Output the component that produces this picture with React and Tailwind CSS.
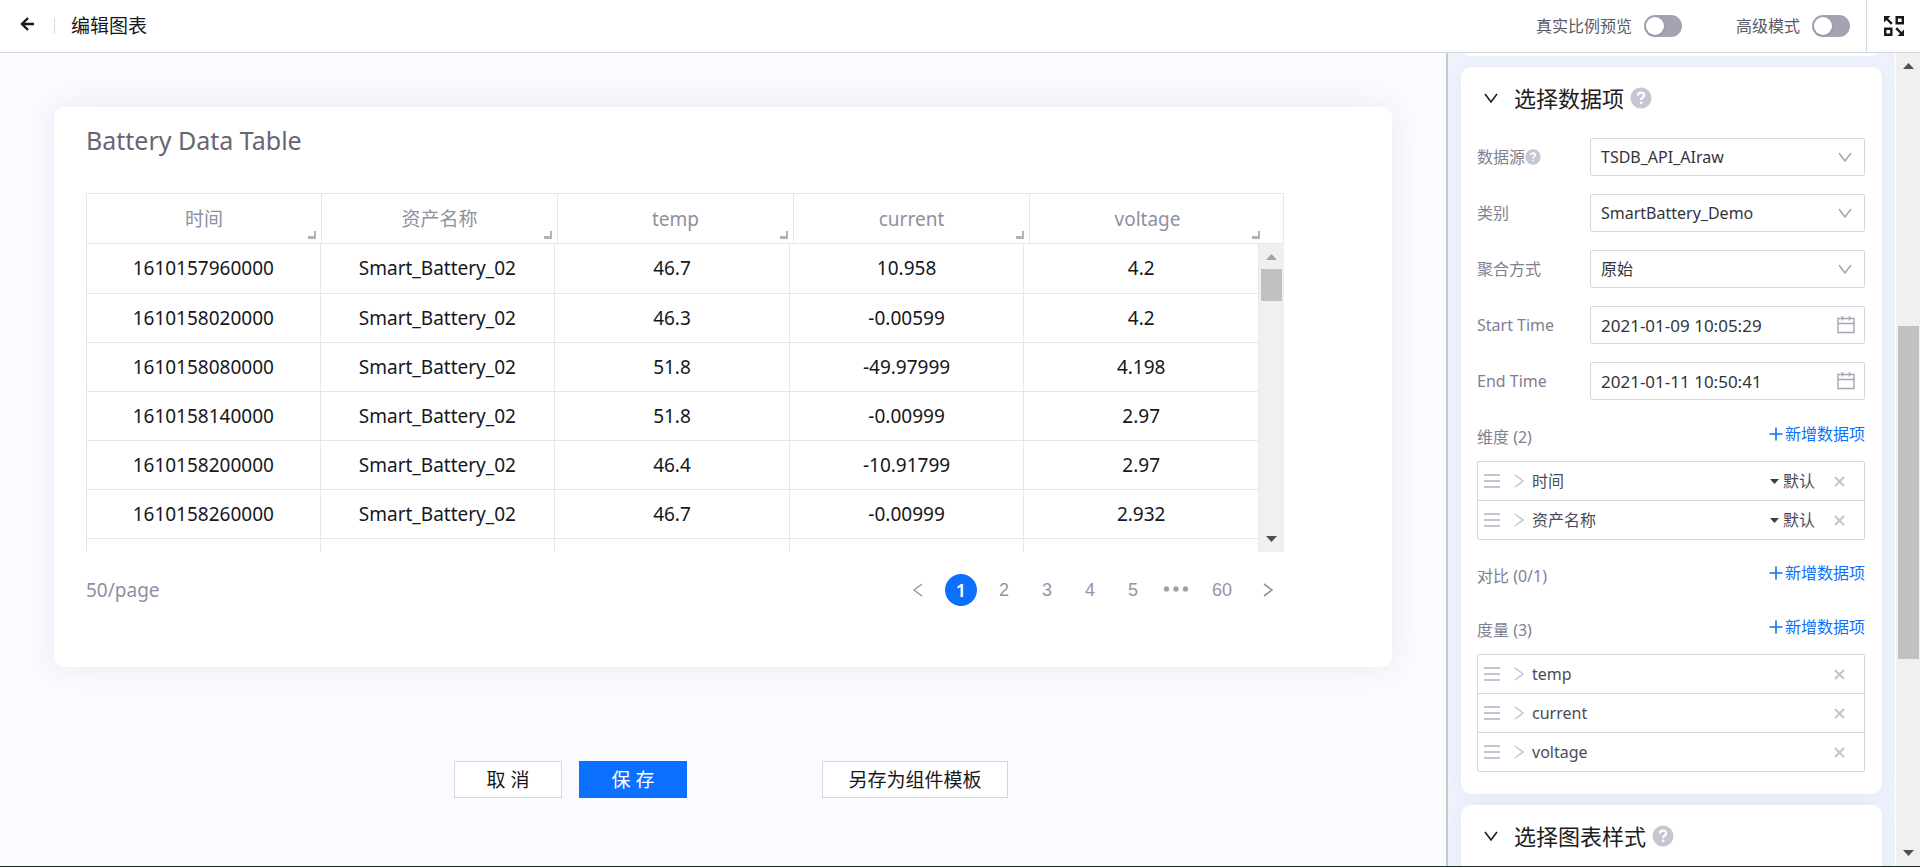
import React, { useState } from 'react'

const ROWS = [
    ['1610157960000', 'Smart_Battery_02', '46.7', '10.958', '4.2'],
    ['1610158020000', 'Smart_Battery_02', '46.3', '-0.00599', '4.2'],
    ['1610158080000', 'Smart_Battery_02', '51.8', '-49.97999', '4.198'],
    ['1610158140000', 'Smart_Battery_02', '51.8', '-0.00999', '2.97'],
    ['1610158200000', 'Smart_Battery_02', '46.4', '-10.91799', '2.97'],
    ['1610158260000', 'Smart_Battery_02', '46.7', '-0.00999', '2.932'],
]

const COLUMNS = ['时间', '资产名称', 'temp', 'current', 'voltage']

const Chevron = ({ className, d, width = 14, height = 14, stroke = 1.4 }) => (
    <svg className={className} width={width} height={height} viewBox="0 0 14 14" fill="none" stroke="currentColor" strokeWidth={stroke}>
        <path d={d} />
    </svg>
)

const DOWN = 'M1 3l6 8 6-8'
const RIGHT = 'M3 1l8 6-8 6'
const LEFT = 'M11 1L3 7l8 6'

const Help = ({ className }) => (
    <svg className={className} viewBox="0 0 22 22" fill="none">
        <circle cx="11" cy="11" r="10.5" fill="#c5c5d3" />
        <path d="M7.9 8.6c0-1.8 1.3-2.9 3.1-2.9s3.1 1.1 3.1 2.7c0 2.2-3 2.3-3 4.7" stroke="#fff" strokeWidth="2.2" />
        <circle cx="11.1" cy="15.9" r="1.4" fill="#fff" />
    </svg>
)

const Calendar = () => (
    <svg className="pointer-events-none absolute right-2.5 top-2.5" width="18" height="18" viewBox="0 0 18 18" fill="none" stroke="#a6a6b5" strokeWidth="1.4">
        <path d="M1 2.5h16v14H1zM1 7.5h16M5.5 0v4.5M12.5 0v4.5" />
    </svg>
)

const Arrow = ({ up, color }) => (
    <svg className="mx-auto" width="11" height="6" viewBox="0 0 11 6">
        <path fill={color} d={up ? 'M0 6L5.5 0 11 6z' : 'M0 0l5.5 6L11 0z'} />
    </svg>
)

const Toggle = ({ label }) => (
    <label className="flex items-center gap-3 text-[16px] text-[#5a5a66]">
        {label}
        <input
            type="checkbox"
            className="h-[22px] w-[38px] cursor-pointer appearance-none rounded-full bg-[#a3a3b4] before:ml-0.5 before:mt-0.5 before:block before:size-[18px] before:rounded-full before:bg-white before:shadow checked:bg-[#0b70ff] checked:before:ml-[18px]"
        />
    </label>
)

const Field = ({ id, label, help, children }) => (
    <div className="flex items-center">
        <label htmlFor={id} className="flex w-[113px] shrink-0 items-center text-[16px] text-[#7f7f92]">
            {label}
            {help && <Help className="size-4" />}
        </label>
        <div className="relative flex-1">{children}</div>
    </div>
)

const SelectField = ({ id, label, help, value }) => (
    <Field id={id} label={label} help={help}>
        <select id={id} className="h-[38px] w-full appearance-none rounded-xs border border-[#d6d6e0] bg-white px-2.5 text-[16px] text-[#33333d]">
            <option>{value}</option>
        </select>
        <Chevron d={DOWN} stroke={1.4} className="pointer-events-none absolute right-[13px] top-3 text-[#a3a3b4]" />
    </Field>
)

const DateField = ({ id, label, value }) => (
    <Field id={id} label={label}>
        <input id={id} type="text" defaultValue={value} className="h-[38px] w-full rounded-xs border border-[#d6d6e0] bg-white px-2.5 text-[17px] text-[#33333d]" />
        <Calendar />
    </Field>
)

const GroupTitle = ({ label }) => (
    <div className="flex h-6 items-center justify-between text-[16px] text-[#7f7f92]">
        <span>{label}</span>
        <button type="button" className="mb-1.5 flex items-center gap-0.5 text-[#0b70ff]">
            <svg width="14" height="14" viewBox="0 0 14 14" stroke="currentColor" strokeWidth="1.6">
                <path d="M7 0.5v13M0.5 7h13" />
            </svg>
            新增数据项
        </button>
    </div>
)

const ItemList = ({ items, sortable }) => (
    <ul className="rounded-xs border border-[#d6d6e0]">
        {items.map((item) => (
            <li key={item} className="flex h-[39px] items-center border-b border-[#d6d6e0] pl-1.5 pr-[19px] text-[16px] text-[#4b4b57] last:h-[38px] last:border-b-0">
                <svg className="mr-3 text-[#c3c3d1]" width="16" height="14" viewBox="0 0 16 14" stroke="currentColor" strokeWidth="2">
                    <path d="M0 1h16M0 7h16M0 13h16" />
                </svg>
                <Chevron d={RIGHT} stroke={1.5} className="mr-1.5 text-[#c3c3d1]" />
                <span className="flex-1">{item}</span>
                {sortable && (
                    <button type="button" className="mr-[19px] flex items-center gap-1">
                        <svg width="9" height="5" viewBox="0 0 9 5"><path fill="#3c3c46" d="M0 0h9L4.5 5z" /></svg>
                        默认
                    </button>
                )}
                <button type="button" aria-label="删除">
                    <svg width="11" height="11" viewBox="0 0 11 11" stroke="#c3c3d1" strokeWidth="2">
                        <path d="M1 1l9 9M10 1l-9 9" />
                    </svg>
                </button>
            </li>
        ))}
    </ul>
)

const PanelTitle = ({ label }) => (
    <h2 className="flex h-8 items-center text-[22px] text-[#1c1c22]">
        <Chevron d={DOWN} stroke={1.6} className="ml-[7px] mr-4" />
        {label}
        <Help className="ml-1.5 size-[22px]" />
    </h2>
)

const DataTable = () => (
    <div className="w-[1198px] max-w-full text-[19px]">
        <table className="w-full table-fixed border-separate border-spacing-0">
            <colgroup>
                {COLUMNS.map((name, i) => <col key={name} className={i < 4 ? 'w-[236px]' : ''} />)}
            </colgroup>
            <thead>
                <tr className="h-[51px] text-[#8f8fa1]">
                    {COLUMNS.map((name) => (
                        <th key={name} className="relative border-y border-r border-[#e6e6ed] p-0 pt-0.5 font-normal first:rounded-tl-xs first:border-l last:pr-[18px]">
                            {name}
                            <span className={name === 'voltage' ? 'absolute bottom-1 right-[23px] size-2 border-b-3 border-r-2 border-[#b3b3b3]' : 'absolute bottom-1 right-[5px] size-2 border-b-3 border-r-2 border-[#b3b3b3]'} />
                        </th>
                    ))}
                </tr>
            </thead>
        </table>
        <div className="flex h-[308px] overflow-hidden">
            <table className="flex-1 table-fixed border-separate border-spacing-0 text-center text-[#17171c]">
                <tbody>
                    {ROWS.map((row) => (
                        <tr key={row[0]} className="h-[49px] first:h-[50px]">
                            {row.map((cell, i) => (
                                <td key={i} className="w-1/5 border-b border-r border-[#e6e6ed] p-0 first:border-l">{cell}</td>
                            ))}
                        </tr>
                    ))}
                    <tr className="h-[49px]">
                        {COLUMNS.map((name) => (
                            <td key={name} className="border-r border-[#e6e6ed] first:border-l" />
                        ))}
                    </tr>
                </tbody>
            </table>
            <div className="flex w-[25px] flex-col bg-[#f0f0f0] pb-2.5 pt-2.5">
                <Arrow up color="#a3a3a3" />
                <div className="mx-0.5 mb-auto mt-[9px] h-8 bg-[#c1c1c1]" />
                <Arrow color="#505050" />
            </div>
        </div>
    </div>
)

const Pagination = () => {
    const [page, setPage] = useState(1)
    const number = (n) => (
        <button
            key={n}
            type="button"
            onClick={() => setPage(n)}
            className={n === page ? 'size-8 rounded-full bg-[#0b70ff] font-["Noto_Sans"] font-semibold text-white' : 'size-8'}
        >
            {n}
        </button>
    )

    return (
        <nav className='flex items-center gap-[11px] font-["Liberation_Sans",sans-serif] text-[18px] text-[#9494a5]'>
            <button type="button" aria-label="上一页" className="flex size-8 items-center justify-center"><Chevron d={LEFT} stroke={1.4} /></button>
            {[1, 2, 3, 4, 5].map(number)}
            <svg width="32" height="32" viewBox="0 0 32 32" fill="#a0a0b0">
                <circle cx="6.5" cy="15" r="2.7" />
                <circle cx="16" cy="15" r="2.7" />
                <circle cx="25.5" cy="15" r="2.7" />
            </svg>
            <button type="button" className="h-8 w-[38px]">60</button>
            <button type="button" aria-label="下一页" className="flex size-8 items-center justify-center"><Chevron d={RIGHT} stroke={1.6} /></button>
        </nav>
    )
}

const ActionButton = ({ children, className }) => (
    <button type="button" className={`h-[37px] border pt-0.5 text-[19px] ${className}`}>{children}</button>
)

export default function App() {
    return (
        <div className='flex h-screen flex-col overflow-hidden border-b border-[#1b2b30] bg-white font-["Noto_Sans","Noto_Sans_CJK_SC",sans-serif]'>
            <header className="flex h-[53px] shrink-0 items-center border-b border-[#d6d6e0]">
                <button type="button" aria-label="返回" className="mb-1 ml-5">
                    <svg width="14" height="14" viewBox="0 0 14 14" fill="none" stroke="#17171c" strokeWidth="2.4">
                        <path d="M14 7H2M8 1L2 7l6 6" />
                    </svg>
                </button>
                <span className="ml-5 h-4 w-px bg-[#d6d6e0]" />
                <h1 className="ml-4 flex-1 text-[19px] text-[#17171c]">编辑图表</h1>
                <div className="flex gap-[54px]">
                    <Toggle label="真实比例预览" />
                    <Toggle label="高级模式" />
                </div>
                <button type="button" aria-label="全屏" className="ml-4 flex h-full w-[54px] items-center justify-center border-l border-[#d6d6e0]">
                    <svg width="20" height="20" viewBox="0 0 20 20" fill="none" stroke="#17171c" strokeWidth="2.4">
                        <path d="M2 2l5.8 5.8M18 18l-5.8-5.8M12.7 1.2h6.1v6.1h-6.1zM1.2 12.7h6.1v6.1H1.2z" />
                        <path d="M0 0h6.5L0 6.5zM20 20h-6.5l6.5-6.5z" fill="#17171c" stroke="none" />
                    </svg>
                </button>
            </header>

            <div className="flex min-h-0 flex-1">
                <main className="min-w-0 flex-1 bg-[#fafbff] px-[54px] pt-[54px]">
                    <section className="h-[560px] rounded-[10px] bg-white px-8 pt-[15px] shadow-[0_0_32px_rgba(60,70,120,0.09)]">
                        <h2 className="mb-[35px] h-9 text-[25px] leading-9 text-[#666673]">Battery Data Table</h2>
                        <DataTable />
                        <div className="mt-[22px] flex w-[1198px] max-w-full items-center justify-between">
                            <span className="text-[19px] text-[#8f8fa1]">50/page</span>
                            <Pagination />
                        </div>
                    </section>
                    <div className="mt-[94px] flex justify-center pl-4">
                        <ActionButton className="mr-[17px] w-[108px] border-[#d6d6e0] bg-white text-[#17171c]">取 消</ActionButton>
                        <ActionButton className="mr-[135px] w-[108px] border-[#0b70ff] bg-[#0b70ff] text-white">保 存</ActionButton>
                        <ActionButton className="w-[186px] border-[#d6d6e0] bg-white text-[#17171c]">另存为组件模板</ActionButton>
                    </div>
                </main>

                <aside className="flex w-[474px] shrink-0 border-l-2 border-[#c9c9cd]">
                    <div className="flex-1 overflow-hidden border-r border-white bg-[#eef2fb] px-[13px]">
                        <div className="-mt-[37px] h-10 rounded-[10px] bg-white" />
                        <section className="mt-[11px] rounded-[10px] bg-white pb-[22px] pl-4 pr-[17px] pt-[15px] shadow-[0_0_16px_rgba(60,80,140,0.06)]">
                            <PanelTitle label="选择数据项" />
                            <div className="mt-6 flex flex-col gap-[18px]">
                                <SelectField id="source" label="数据源" help value="TSDB_API_AIraw" />
                                <SelectField id="category" label="类别" value="SmartBattery_Demo" />
                                <SelectField id="aggregation" label="聚合方式" value="原始" />
                                <DateField id="start" label="Start Time" value="2021-01-09 10:05:29" />
                                <DateField id="end" label="End Time" value="2021-01-11 10:50:41" />
                            </div>
                            <div className="mt-[25px]">
                                <GroupTitle label="维度 (2)" />
                            </div>
                            <div className="mt-3">
                                <ItemList items={['时间', '资产名称']} sortable />
                            </div>
                            <div className="mb-3 mt-6 flex flex-col gap-[30px]">
                                <GroupTitle label="对比 (0/1)" />
                                <GroupTitle label="度量 (3)" />
                            </div>
                            <ItemList items={['temp', 'current', 'voltage']} />
                        </section>
                        <section className="mt-[11px] rounded-[10px] bg-white px-4 pb-10 pt-[15px] shadow-[0_0_16px_rgba(60,80,140,0.06)]">
                            <PanelTitle label="选择图表样式" />
                        </section>
                    </div>
                    <div className="flex w-6 flex-col bg-[#f0f0f0] py-2.5">
                        <Arrow up color="#505050" />
                        <div className="mb-auto ml-0.5 mr-px mt-[257px] h-[333px] bg-[#c1c1c1]" />
                        <Arrow color="#505050" />
                    </div>
                </aside>
            </div>
        </div>
    )
}
